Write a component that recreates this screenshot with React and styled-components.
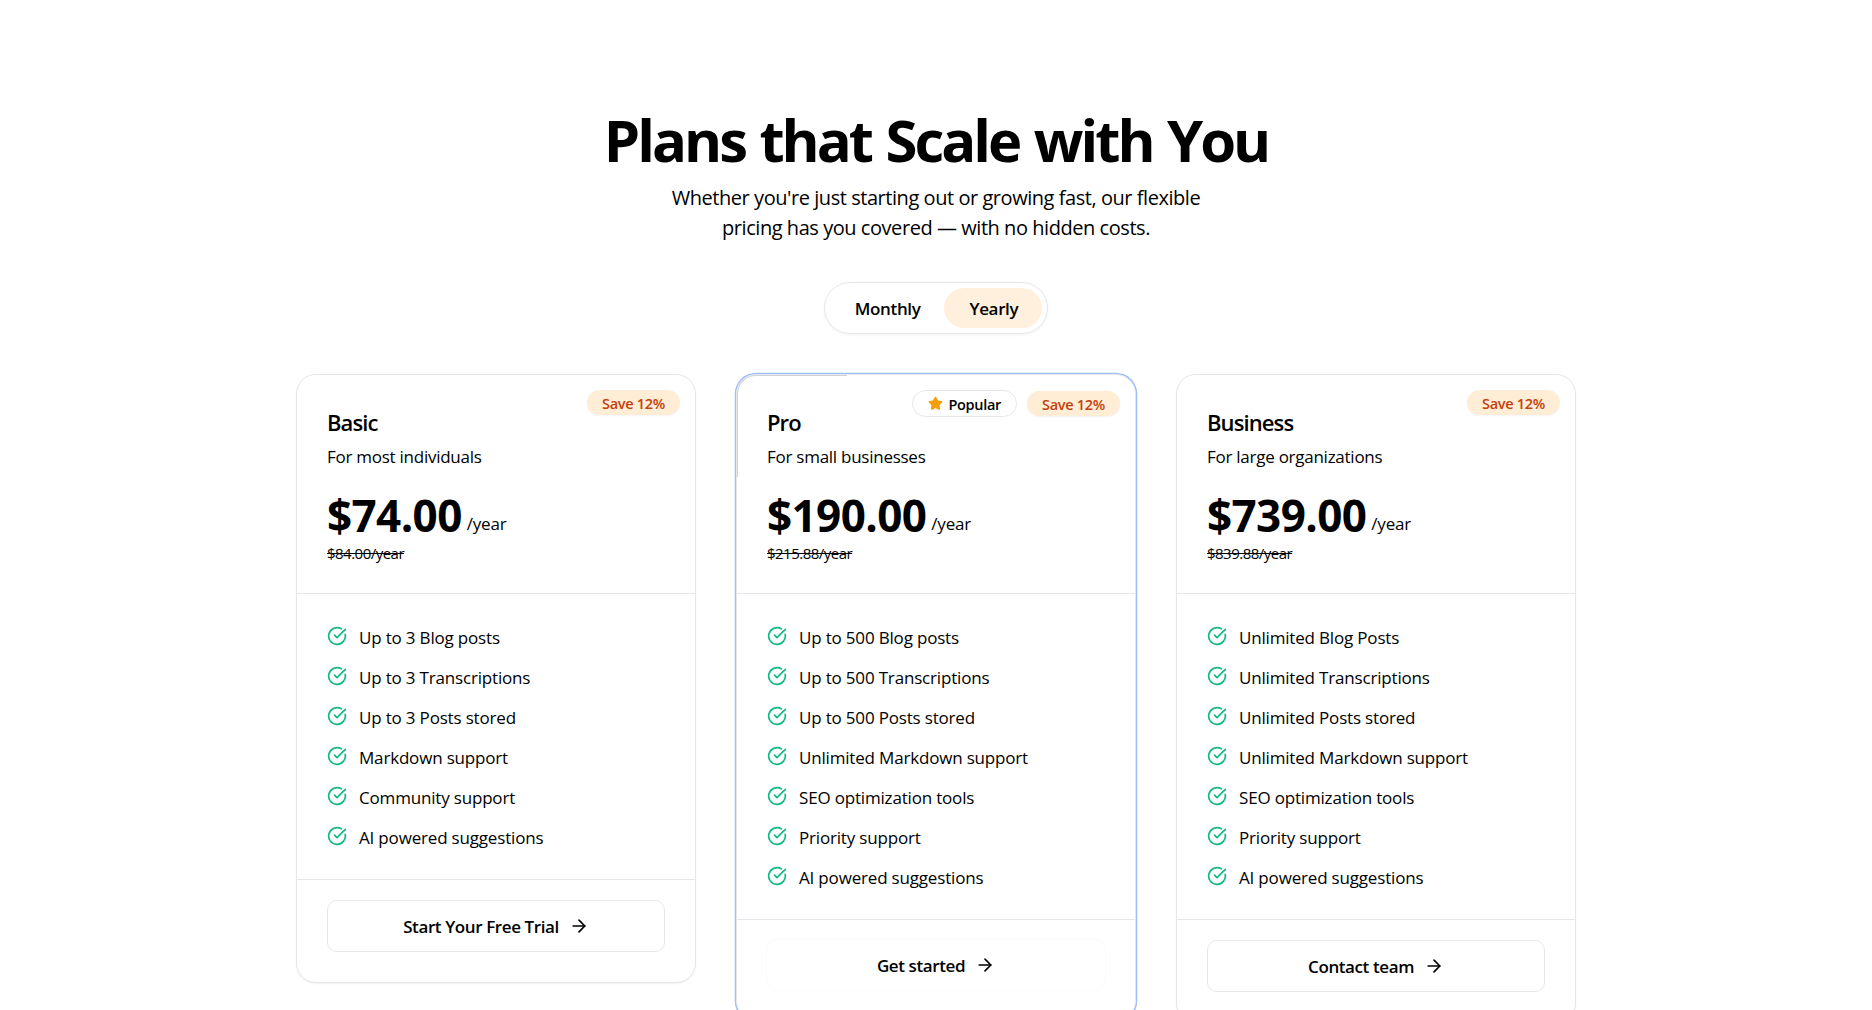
import React, { useState } from "react";
import styled, { createGlobalStyle, css } from "styled-components";
import { ArrowRight, CircleCheckBig, Star } from "lucide-react";

const GlobalStyle = createGlobalStyle`
  * {
    box-sizing: border-box;
  }
  body {
    margin: 0;
    background: #ffffff;
    color: #000000;
    font-family: "Segoe UI", "Open Sans", "Noto Sans", sans-serif;
  }
`;

const Page = styled.main`
  height: 100vh;
  overflow: hidden;
  padding-top: 110px;
  display: flex;
  flex-direction: column;
  align-items: center;
`;

const Heading = styled.h1`
  margin: 0 0 13px;
  font-size: 58px;
  font-weight: 700;
  line-height: 60px;
  letter-spacing: -2.95px;
  word-spacing: 2.2px;
`;

const Lead = styled.p`
  margin: 0 0 39px;
  max-width: 560px;
  font-size: 20px;
  line-height: 30px;
  letter-spacing: -0.45px;
  text-align: center;
`;

const Toggle = styled.div`
  display: flex;
  flex: none;
  height: 52px;
  margin-bottom: 40px;
  padding: 5px;
  border: 1px solid #e5e7eb;
  border-radius: 26px;
  box-shadow: 0 1px 3px rgba(0, 0, 0, 0.06);
`;

const ToggleButton = styled.button`
  all: unset;
  box-sizing: border-box;
  height: 40px;
  padding: 1px 24px 0 25px;
  border-radius: 20px;
  background: ${(props) => (props.$active ? "#ffefdd" : "transparent")};
  font-size: 17px;
  font-weight: 600;
  line-height: 40px;
  letter-spacing: -0.35px;
  cursor: pointer;
`;

const Plans = styled.section`
  display: grid;
  grid-template-columns: repeat(3, 400px);
  gap: 40px;
  align-items: start;
`;

const Card = styled.article`
  position: relative;
  border: 1px solid #e5e7eb;
  border-radius: 20px;
  background: #ffffff;
  box-shadow: 0 1px 2px rgba(0, 0, 0, 0.06);
  ${(props) =>
    props.$highlight &&
    css`
      box-shadow: 0 0 0 1.25px #9dbffa;
    `}
`;

/* light segment running along the inside of the highlighted border */
const BorderBeam = styled.span`
  position: absolute;
  top: 0;
  left: 0;
  width: 110px;
  height: 102px;
  border-top: 1px solid #d3d3d6;
  border-left: 1px solid #d3d3d6;
  border-top-left-radius: 19px;
  pointer-events: none;
`;

const Badges = styled.div`
  position: absolute;
  top: 15px;
  right: 15px;
  display: flex;
  align-items: center;
  gap: 10px;
`;

const Badge = styled.span`
  display: flex;
  align-items: center;
  height: 25px;
  padding: 1px 15px 0;
  border-radius: 13px;
  background: #ffedd5;
  color: #c2410c;
  font-size: 14.5px;
  font-weight: 600;
  letter-spacing: -0.3px;
  box-shadow: 0 1px 2px rgba(0, 0, 0, 0.05);
`;

const PopularBadge = styled(Badge)`
  height: 27px;
  gap: 5px;
  border: 1px solid #e5e7eb;
  border-radius: 14px;
  background: #ffffff;
  color: #000000;
  box-shadow: none;

  svg {
    margin-top: -2px;
  }
`;

const CardHeader = styled.header`
  height: 219px;
  padding: 30px;
  border-bottom: 1px solid #e5e7eb;
`;

const PlanName = styled.h2`
  margin: 0 0 4px;
  font-size: 22px;
  font-weight: 600;
  line-height: 35px;
  letter-spacing: -0.9px;
`;

const Description = styled.p`
  margin: 0 0 21px;
  font-size: 17px;
  line-height: 25px;
  letter-spacing: -0.26px;
`;

const PriceRow = styled.div`
  display: flex;
  align-items: flex-end;
  gap: 5px;
`;

const Price = styled.span`
  font-size: 44px;
  font-weight: 700;
  line-height: 50px;
  letter-spacing: -0.6px;
`;

const Period = styled.span`
  margin-bottom: 4px;
  font-size: 17px;
  line-height: 25px;
  letter-spacing: -0.2px;
`;

const OldPrice = styled.del`
  display: block;
  width: fit-content;
  margin-top: 3px;
  font-size: 15px;
  line-height: 20px;
  letter-spacing: -0.52px;
`;

const Features = styled.ul`
  display: flex;
  flex-direction: column;
  gap: 15px;
  margin: 0;
  padding: 30px;
  list-style: none;
`;

const Feature = styled.li`
  display: flex;
  gap: 12px;
  height: 25px;
  font-size: 17px;
  line-height: 28px;
  letter-spacing: -0.18px;

  svg {
    flex: none;
    margin-top: 2px;
    color: #10b981;
  }
`;

const CardFooter = styled.footer`
  padding: 20px 30px 30px;
  border-top: 1px solid #e5e7eb;
`;

const ActionButton = styled.button`
  all: unset;
  box-sizing: border-box;
  display: flex;
  align-items: center;
  justify-content: center;
  gap: 10px;
  width: 100%;
  height: 52px;
  border: 1px solid #e5e7eb;
  border-radius: 10px;
  font-size: 17px;
  font-weight: 600;
  letter-spacing: -0.4px;
  cursor: pointer;
  ${(props) =>
    props.$plain &&
    css`
      height: 50px;
      border: none;
      box-shadow: 0 0 3px rgba(0, 0, 0, 0.05);
    `}
`;

const plans = [
  {
    name: "Basic",
    description: "For most individuals",
    price: "$74.00",
    oldPrice: "$84.00/year",
    action: "Start Your Free Trial",
    features: [
      "Up to 3 Blog posts",
      "Up to 3 Transcriptions",
      "Up to 3 Posts stored",
      "Markdown support",
      "Community support",
      "AI powered suggestions",
    ],
  },
  {
    name: "Pro",
    description: "For small businesses",
    price: "$190.00",
    oldPrice: "$215.88/year",
    action: "Get started",
    popular: true,
    features: [
      "Up to 500 Blog posts",
      "Up to 500 Transcriptions",
      "Up to 500 Posts stored",
      "Unlimited Markdown support",
      "SEO optimization tools",
      "Priority support",
      "AI powered suggestions",
    ],
  },
  {
    name: "Business",
    description: "For large organizations",
    price: "$739.00",
    oldPrice: "$839.88/year",
    action: "Contact team",
    features: [
      "Unlimited Blog Posts",
      "Unlimited Transcriptions",
      "Unlimited Posts stored",
      "Unlimited Markdown support",
      "SEO optimization tools",
      "Priority support",
      "AI powered suggestions",
    ],
  },
];

function PlanCard({ plan }) {
  return (
    <Card $highlight={plan.popular}>
      {plan.popular && <BorderBeam />}
      <Badges>
        {plan.popular && (
          <PopularBadge>
            <Star size={15} color="#f59e0b" fill="#f59e0b" />
            Popular
          </PopularBadge>
        )}
        <Badge>Save 12%</Badge>
      </Badges>
      <CardHeader>
        <PlanName>{plan.name}</PlanName>
        <Description>{plan.description}</Description>
        <PriceRow>
          <Price>{plan.price}</Price>
          <Period>/year</Period>
        </PriceRow>
        <OldPrice>{plan.oldPrice}</OldPrice>
      </CardHeader>
      <Features>
        {plan.features.map((feature) => (
          <Feature key={feature}>
            <CircleCheckBig size={20} />
            <span>{feature}</span>
          </Feature>
        ))}
      </Features>
      <CardFooter>
        <ActionButton $plain={plan.popular}>
          {plan.action}
          <ArrowRight size={20} />
        </ActionButton>
      </CardFooter>
    </Card>
  );
}

export default function App() {
  const [period, setPeriod] = useState("Yearly");
  return (
    <>
      <GlobalStyle />
      <Page>
        <Heading>Plans that Scale with You</Heading>
        <Lead>
          Whether you're just starting out or growing fast, our flexible pricing
          has you covered — with no hidden costs.
        </Lead>
        <Toggle>
          {["Monthly", "Yearly"].map((item) => (
            <ToggleButton
              key={item}
              $active={item === period}
              onClick={() => setPeriod(item)}
            >
              {item}
            </ToggleButton>
          ))}
        </Toggle>
        <Plans>
          {plans.map((plan) => (
            <PlanCard key={plan.name} plan={plan} />
          ))}
        </Plans>
      </Page>
    </>
  );
}
